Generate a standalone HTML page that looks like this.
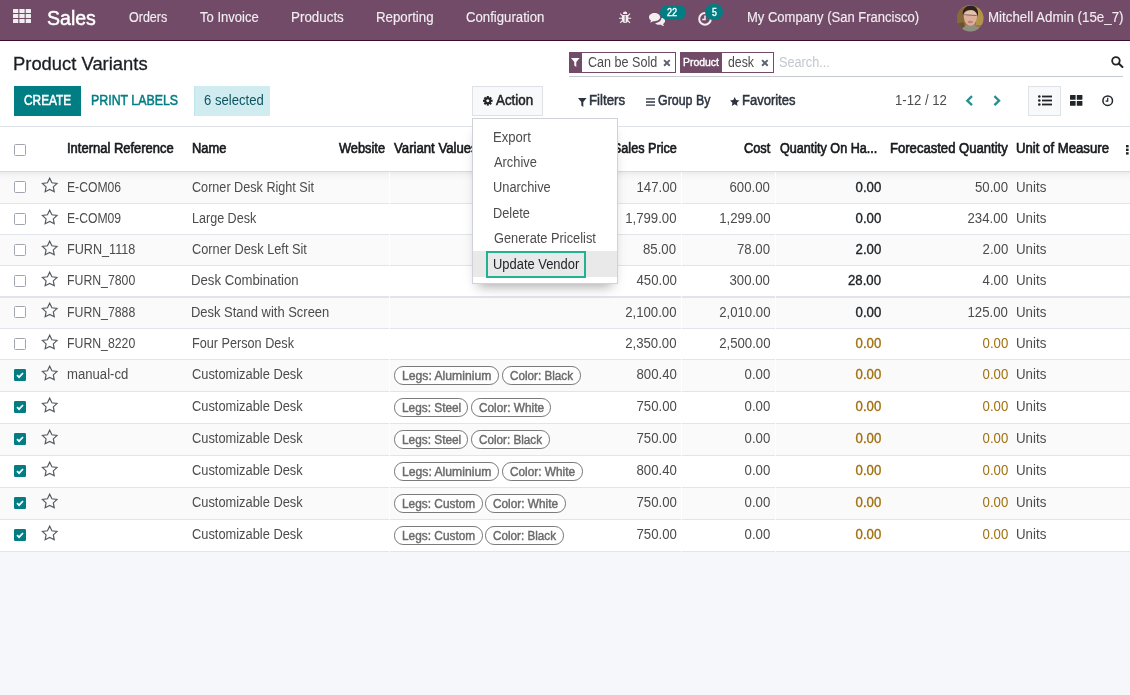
<!DOCTYPE html>
<html lang="en"><head><meta charset="utf-8"><title>Odoo - Product Variants</title>
<style>
*{box-sizing:border-box}
html,body{margin:0;padding:0}
body{width:1130px;height:695px;overflow:hidden;position:relative;background:#f6f7fa;font-family:"Liberation Sans",Arial,sans-serif;font-size:14px;color:#4c4c4c}
.t{position:absolute;white-space:nowrap;line-height:1;transform-origin:0 50%;display:block}
.abs{position:absolute}
nav{position:absolute;left:0;top:0;width:1130px;height:41px;background:#714B67;border-bottom:1px solid #3c0c30}
.cp{position:absolute;left:0;top:41px;width:1130px;height:86px;background:#fff;border-bottom:1px solid #dfe2e6}
.tbl{position:absolute;left:0;top:127px;width:1130px;height:425px;background:#fff}
.row{position:absolute;left:0;width:1130px;border-top:1px solid #e1e4e8;background:#fff}
.row.odd{background:#fafafa}
.cb{position:absolute;left:14px;width:12px;height:12px;border:1px solid #a2a7af;border-radius:1.5px;background:#fff}
.cb.on{background:#017e84;border-color:#017e84;width:11.5px;border-radius:1px}
.pill{position:absolute;height:18.2px;border:1px solid #7b7b7b;border-radius:9.1px;background:#fff}
.btn{position:absolute;top:86px;height:30px}
.dd{position:absolute;left:472px;top:118px;width:146px;height:166px;background:#fff;border:1px solid #cfd2d8;box-shadow:0 8px 12px -6px rgba(0,0,0,.36)}
svg{position:absolute;overflow:visible}
</style></head>
<body>
<nav>

<svg style="left:13px;top:9px" width="18" height="14" viewBox="0 0 18 14" fill="#f1edf0"><rect x="0" y="0" width="5.3" height="4" rx=".6"/><rect x="6.35" y="0" width="5.3" height="4" rx=".6"/><rect x="12.7" y="0" width="5.3" height="4" rx=".6"/><rect x="0" y="5" width="5.3" height="4" rx=".6"/><rect x="6.35" y="5" width="5.3" height="4" rx=".6"/><rect x="12.7" y="5" width="5.3" height="4" rx=".6"/><rect x="0" y="10" width="5.3" height="4" rx=".6"/><rect x="6.35" y="10" width="5.3" height="4" rx=".6"/><rect x="12.7" y="10" width="5.3" height="4" rx=".6"/></svg>
<svg style="left:619px;top:10.6px" width="12.2" height="12.8" viewBox="0 0 12.2 12.8">
<g stroke="#f1edf0" stroke-width="1.1" fill="none"><path d="M0 7.2H12.2M1.2 2.6L3.4 4.8M11 2.6L8.8 4.8M1.2 12L3.4 9.6M11 12L8.8 9.6"/></g>
<path d="M3.9 2.9a2.2 2.4 0 0 1 4.4 0z" fill="#f1edf0"/>
<path d="M2.9 3.9h6.4v4.6a3.2 3.4 0 0 1-6.4 0z" fill="#f1edf0"/>
<rect x="5.7" y="4.6" width=".9" height="6.6" fill="#714B67"/>
</svg>
<svg style="left:648.8px;top:12.7px" width="16.4" height="12.8" viewBox="0 0 16.4 12.8" fill="#f1edf0">
<path d="M5.6 0C2.5 0 0 1.9 0 4.2c0 1.3.8 2.5 2.1 3.3-.2.8-.7 1.5-1.3 2 1.300-.100 2.500-.600 3.400-1.300.450.080.920.120 1.400.120 3.100 0 5.600-1.900 5.600-4.200S8.700 0 5.600 0z"/>
<path d="M12.4 4.700c0 2.700-2.800 4.900-6.300 5.050 1.000 1.000 2.600 1.650 4.400 1.650.480 0 .950-.040 1.400-.120.900.700 2.100 1.200 3.400 1.300-.600-.500-1.100-1.200-1.300-2 1.300-.800 2.100-2 2.100-3.300 0-1.400-.950-2.650-2.400-3.400.200.260.300.540.300.820z" transform="translate(0 .4)"/>
</svg>
<div class="abs" style="left:659.9px;top:4.8px;width:25.7px;height:15.6px;border-radius:7.8px;background:#017e84"></div>
<svg style="left:697.9px;top:11.7px" width="14.1" height="13.8" viewBox="0 0 14.1 13.8">
<circle cx="7" cy="6.9" r="5.8" fill="none" stroke="#f1edf0" stroke-width="2"/>
<path d="M7 3.4V7.4H4.2" fill="none" stroke="#f1edf0" stroke-width="1.5"/>
</svg>
<div class="abs" style="left:704.5px;top:4.2px;width:18.3px;height:16px;border-radius:8px;background:#017e84"></div>
<svg style="left:956.7px;top:4.7px" width="26.5" height="26.5" viewBox="0 0 26.5 26.5">
<defs><clipPath id="av"><circle cx="13.25" cy="13.25" r="13.25"/></clipPath><filter id="bl" x="-20%" y="-20%" width="140%" height="140%"><feGaussianBlur stdDeviation=".75"/></filter></defs>
<g clip-path="url(#av)"><rect width="26.5" height="26.5" fill="#98793f"/>
<g filter="url(#bl)">
<rect x="-2" y="-2" width="9" height="30" fill="#86683a"/><rect x="19" y="3" width="9" height="17" fill="#b3924e"/>
<path d="M-1 19 L7 17 L9 28 L-1 28Z" fill="#6a5236"/>
<path d="M4 28 C5 21 9 20.500 13 21 C19 20 23.500 21.500 25 28Z" fill="#8d8f82"/>
<path d="M6.800 12 C6.300 6.500 9.500 3.800 13.600 3.800 C17.800 3.800 20.400 7 19.800 12.500 C19.300 17 17 20.800 13.600 20.800 C10 20.800 7.300 17 6.800 12Z" fill="#dcb09a"/>
<path d="M8 9 C10 5.500 16 5 19 8.500 L19.500 12 C17 9.500 10 9.500 7.500 12Z" fill="#e7c3ae"/>
<path d="M5.900 10.500 C4.800 3.500 9.500 .4 14.500 .8 C19.500 1.200 22 5 20.800 12 C20.300 8.500 18.800 6 16 5.200 C12.500 4.300 8.500 5.500 7 8 C6.400 9 6.100 9.800 5.900 10.500Z" fill="#2a211e"/>
<rect x="7.300" y="9.600" width="12.300" height="1" fill="#6a5650" opacity=".85" transform="rotate(4 13 10)"/>
<ellipse cx="13.300" cy="17" rx="2.700" ry="1.200" fill="#c4807c"/>
<path d="M8.500 19 C10 22 17 22 19 18.500 L18 21 L9.500 21.500Z" fill="#b98b78"/>
</g></g></svg>

<span class="t" style="left:47.44px;top:8.0px;font-size:20.5px;transform:scaleX(0.9528);color:#ffffff;-webkit-text-stroke:0.5px #ffffff;">Sales</span>
<span class="t" style="left:128.67px;top:10.0px;font-size:14px;transform:scaleX(0.8944);color:#f1edf0;-webkit-text-stroke:0.15px #f1edf0;">Orders</span>
<span class="t" style="left:200.07px;top:10.0px;font-size:14px;transform:scaleX(0.9306);color:#f1edf0;-webkit-text-stroke:0.15px #f1edf0;">To Invoice</span>
<span class="t" style="left:290.52px;top:10.0px;font-size:14px;transform:scaleX(0.9559);color:#f1edf0;-webkit-text-stroke:0.15px #f1edf0;">Products</span>
<span class="t" style="left:375.52px;top:10.0px;font-size:14px;transform:scaleX(0.9481);color:#f1edf0;-webkit-text-stroke:0.15px #f1edf0;">Reporting</span>
<span class="t" style="left:465.67px;top:10.0px;font-size:14px;transform:scaleX(0.9414);color:#f1edf0;-webkit-text-stroke:0.15px #f1edf0;">Configuration</span>
<span class="t" style="left:747.14px;top:10.0px;font-size:14px;transform:scaleX(0.9289);color:#f1edf0;-webkit-text-stroke:0.15px #f1edf0;">My Company (San Francisco)</span>
<span class="t" style="left:987.72px;top:10.0px;font-size:14px;transform:scaleX(0.9516);color:#f1edf0;-webkit-text-stroke:0.15px #f1edf0;">Mitchell Admin (15e_7)</span>
<span class="t" style="left:667.47px;top:6.9px;font-size:10.5px;transform:scaleX(0.8756);color:#fff;-webkit-text-stroke:0.38px #fff;">22</span>
<span class="t" style="left:711.56px;top:6.7px;font-size:10.5px;transform:scaleX(0.8307);color:#fff;-webkit-text-stroke:0.38px #fff;">5</span>
</nav>
<div class="cp">

<div class="abs" style="left:569px;top:11px;width:107px;height:21px;border:1px solid #714B67;background:#fff"></div>
<div class="abs" style="left:569px;top:11px;width:13px;height:21px;background:#714B67"></div>
<svg style="left:571.2px;top:17.2px" width="8.6" height="9" viewBox="0 0 8.6 9"><path d="M0 0H8.6L5.3 3.900V9L3.300 7.400V3.900Z" fill="#fff"/></svg>
<svg style="left:663.2px;top:18.1px" width="7.8" height="7.8" viewBox="0 0 7.2 7.2"><path d="M1 1L6.2 6.2M6.2 1L1 6.2" stroke="#5c6370" stroke-width="1.8" fill="none"/></svg>
<div class="abs" style="left:680px;top:11px;width:94px;height:21px;border:1px solid #714B67;background:#fff"></div>
<div class="abs" style="left:680px;top:11px;width:41.600px;height:21px;background:#714B67"></div>
<svg style="left:760.9px;top:18.1px" width="7.8" height="7.8" viewBox="0 0 7.2 7.2"><path d="M1 1L6.2 6.2M6.2 1L1 6.2" stroke="#5c6370" stroke-width="1.8" fill="none"/></svg>
<div class="abs" style="left:569px;top:35px;width:554px;height:1px;background:#c5c9d0"></div>
<svg style="left:1111px;top:15.2px" width="12.4" height="11.6" viewBox="0 0 12.600 12"><circle cx="5" cy="5" r="3.900" fill="none" stroke="#212529" stroke-width="1.900"/><path d="M7.900 7.800L11.700 11.300" stroke="#212529" stroke-width="2.200" stroke-linecap="round"/></svg>

<div class="btn" style="left:14px;top:45px;width:67px;background:#017e84"></div>
<div class="btn" style="left:194px;top:45px;width:76px;background:#d1ecf1;border-left:1px solid #bee5eb"></div>
<div class="btn" style="left:472px;top:45px;width:71px;background:#f8f9fa;border:1px solid #dee2e6"></div>
<svg style="left:482.600px;top:54.800px" width="9.600" height="9.600" viewBox="-4.800 -4.800 9.600 9.600">
<g fill="#212529"><circle r="3.500"/>
<rect x="-1.050" y="-4.800" width="2.100" height="9.600"/><rect x="-1.050" y="-4.800" width="2.100" height="9.600" transform="rotate(45)"/><rect x="-1.050" y="-4.800" width="2.100" height="9.600" transform="rotate(90)"/><rect x="-1.050" y="-4.800" width="2.100" height="9.600" transform="rotate(135)"/></g>
<circle r="1.500" fill="#f8f9fa"/></svg>

<svg style="left:578px;top:56.500px" width="8.600" height="9" viewBox="0 0 8.600 9"><path d="M0 0H8.600L5.300 3.900V9L3.300 7.400V3.900Z" fill="#2c3440"/></svg>
<svg style="left:645.600px;top:56.500px" width="9" height="8" viewBox="0 0 9 8"><path d="M0 .9H9M0 4H9M0 7.100H9" stroke="#2c3440" stroke-width="1.400"/></svg>
<svg style="left:730px;top:55.500px" width="9.400" height="9" viewBox="0 0 9.400 9"><path d="M4.700 0L6.100 3.100L9.400 3.450L6.950 5.700L7.600 9L4.700 7.350L1.800 9L2.450 5.700L0 3.450L3.300 3.100Z" fill="#2c3440"/></svg>

<svg style="left:965px;top:53.600px" width="8.400" height="11.400" viewBox="0 0 8.400 11.400"><path d="M7 1.200L2.300 5.700L7 10.200" fill="none" stroke="#2a8d92" stroke-width="2.300"/></svg>
<svg style="left:992.600px;top:53.600px" width="8.400" height="11.400" viewBox="0 0 8.400 11.400"><path d="M1.400 1.200L6.100 5.700L1.400 10.200" fill="none" stroke="#2a8d92" stroke-width="2.300"/></svg>

<div class="btn" style="left:1028px;top:45px;width:33px;background:#f8f9fa;border:1px solid #dee2e6"></div>
<svg style="left:1037.600px;top:54px" width="14" height="11" viewBox="0 0 14 11" fill="#212529">
<circle cx="1.300" cy="1.500" r="1.300"/><circle cx="1.300" cy="5.500" r="1.300"/><circle cx="1.300" cy="9.500" r="1.300"/>
<rect x="4" y=".6" width="10" height="1.800"/><rect x="4" y="4.600" width="10" height="1.800"/><rect x="4" y="8.600" width="10" height="1.800"/></svg>
<svg style="left:1070px;top:53.600px" width="12.400" height="10.800" viewBox="0 0 12.400 10.800" fill="#212529">
<rect x="0" y="0" width="5.600" height="4.800" rx=".5"/><rect x="6.800" y="0" width="5.600" height="4.800" rx=".5"/><rect x="0" y="6" width="5.600" height="4.800" rx=".5"/><rect x="6.800" y="6" width="5.600" height="4.800" rx=".5"/></svg>
<svg style="left:1101.600px;top:54px" width="11.400" height="11.400" viewBox="0 0 11.400 11.400"><circle cx="5.700" cy="5.700" r="4.800" fill="none" stroke="#212529" stroke-width="1.500"/><path d="M5.700 2.800V6.100H3.600" fill="none" stroke="#212529" stroke-width="1.200"/></svg>

<div class="abs" style="left:0px;top:-41px;width:1130px;height:0"><span class="t" style="left:13.16px;top:54.5px;font-size:18.6px;transform:scaleX(0.9891);color:#1b1f23;-webkit-text-stroke:0.3px #1b1f23;">Product Variants</span>
<span class="t" style="left:23.81px;top:93.0px;font-size:14px;transform:scaleX(0.8478);color:#fff;-webkit-text-stroke:0.5px #fff;">CREATE</span>
<span class="t" style="left:90.74px;top:93.0px;font-size:14px;transform:scaleX(0.8839);color:#017e84;-webkit-text-stroke:0.5px #017e84;">PRINT LABELS</span>
<span class="t" style="left:203.60px;top:93.0px;font-size:14px;transform:scaleX(0.9360);color:#0c5460;">6 selected</span>
<span class="t" style="left:495.84px;top:93.0px;font-size:14px;transform:scaleX(0.9528);color:#212529;-webkit-text-stroke:0.5px #212529;">Action</span>
<span class="t" style="left:589.29px;top:93.0px;font-size:14px;transform:scaleX(0.9465);color:#2c3440;-webkit-text-stroke:0.5px #2c3440;">Filters</span>
<span class="t" style="left:657.82px;top:93.0px;font-size:14px;transform:scaleX(0.8853);color:#2c3440;-webkit-text-stroke:0.5px #2c3440;">Group By</span>
<span class="t" style="left:742.30px;top:93.0px;font-size:14px;transform:scaleX(0.9286);color:#2c3440;-webkit-text-stroke:0.5px #2c3440;">Favorites</span>
<span class="t" style="left:895.46px;top:93.0px;font-size:14px;transform:scaleX(0.9399);">1-12 / 12</span>
<span class="t" style="left:588.00px;top:55.0px;font-size:14px;transform:scaleX(0.8995);">Can be Sold</span>
<span class="t" style="left:682.79px;top:57.1px;font-size:10.6px;transform:scaleX(0.9852);color:#fff;-webkit-text-stroke:0.38px #fff;">Product</span>
<span class="t" style="left:727.60px;top:55.0px;font-size:14px;transform:scaleX(0.8766);">desk</span>
<span class="t" style="left:779.00px;top:55.0px;font-size:14px;transform:scaleX(0.9068);color:#c3c7cc;">Search...</span></div>
</div>
<div class="tbl">
<div class="row odd" style="top:44px;height:32px;border-top-width:1px;border-top-color:#eaebee"></div>
<div class="row" style="top:76px;height:31px;border-top-width:1px"></div>
<div class="row odd" style="top:107px;height:31px;border-top-width:1px"></div>
<div class="row" style="top:138px;height:31px;border-top-width:1px"></div>
<div class="row odd" style="top:169px;height:32px;border-top-width:2px"></div>
<div class="row" style="top:201px;height:31px;border-top-width:1px"></div>
<div class="row odd" style="top:232px;height:32px;border-top-width:1px"></div>
<div class="row" style="top:264px;height:32px;border-top-width:1px"></div>
<div class="row odd" style="top:296px;height:32px;border-top-width:1px"></div>
<div class="row" style="top:328px;height:32px;border-top-width:1px"></div>
<div class="row odd" style="top:360px;height:32px;border-top-width:1px"></div>
<div class="row" style="top:392px;height:32px;border-top-width:1px"></div>
<div class="row" style="top:424px;height:1px;"></div>
<div class="cb" style="top:54px"></div>
<svg style="left:41.4px;top:50.2px" width="17.4" height="16" viewBox="0 0 16.8 16" preserveAspectRatio="none"><path d="M8.4 1.2 L10.55 5.75 L15.5 6.45 L11.9 9.9 L12.8 14.8 L8.4 12.45 L4 14.8 L4.9 9.9 L1.3 6.45 L6.25 5.75 Z" fill="none" stroke="#555b66" stroke-width="1.15" stroke-linejoin="miter"/></svg>
<div class="cb" style="top:86px"></div>
<svg style="left:41.4px;top:81.7px" width="17.4" height="16" viewBox="0 0 16.8 16" preserveAspectRatio="none"><path d="M8.4 1.2 L10.55 5.75 L15.5 6.45 L11.9 9.9 L12.8 14.8 L8.4 12.45 L4 14.8 L4.9 9.9 L1.3 6.45 L6.25 5.75 Z" fill="none" stroke="#555b66" stroke-width="1.15" stroke-linejoin="miter"/></svg>
<div class="cb" style="top:117px"></div>
<svg style="left:41.4px;top:112.7px" width="17.4" height="16" viewBox="0 0 16.8 16" preserveAspectRatio="none"><path d="M8.4 1.2 L10.55 5.75 L15.5 6.45 L11.9 9.9 L12.8 14.8 L8.4 12.45 L4 14.8 L4.9 9.9 L1.3 6.45 L6.25 5.75 Z" fill="none" stroke="#555b66" stroke-width="1.15" stroke-linejoin="miter"/></svg>
<div class="cb" style="top:148px"></div>
<svg style="left:41.4px;top:143.7px" width="17.4" height="16" viewBox="0 0 16.8 16" preserveAspectRatio="none"><path d="M8.4 1.2 L10.55 5.75 L15.5 6.45 L11.9 9.9 L12.8 14.8 L8.4 12.45 L4 14.8 L4.9 9.9 L1.3 6.45 L6.25 5.75 Z" fill="none" stroke="#555b66" stroke-width="1.15" stroke-linejoin="miter"/></svg>
<div class="cb" style="top:179px"></div>
<svg style="left:41.4px;top:175.2px" width="17.4" height="16" viewBox="0 0 16.8 16" preserveAspectRatio="none"><path d="M8.4 1.2 L10.55 5.75 L15.5 6.45 L11.9 9.9 L12.8 14.8 L8.4 12.45 L4 14.8 L4.9 9.9 L1.3 6.45 L6.25 5.75 Z" fill="none" stroke="#555b66" stroke-width="1.15" stroke-linejoin="miter"/></svg>
<div class="cb" style="top:211px"></div>
<svg style="left:41.4px;top:206.7px" width="17.4" height="16" viewBox="0 0 16.8 16" preserveAspectRatio="none"><path d="M8.4 1.2 L10.55 5.75 L15.5 6.45 L11.9 9.9 L12.8 14.8 L8.4 12.45 L4 14.8 L4.9 9.9 L1.3 6.45 L6.25 5.75 Z" fill="none" stroke="#555b66" stroke-width="1.15" stroke-linejoin="miter"/></svg>
<div class="cb on" style="top:242px"><svg style="left:0;top:0" width="10" height="10" viewBox="0 0 10 10"><path d="M2 5.2 L4.1 7.2 L8 3" fill="none" stroke="#fff" stroke-width="1.7"/></svg></div>
<svg style="left:41.4px;top:238.2px" width="17.4" height="16" viewBox="0 0 16.8 16" preserveAspectRatio="none"><path d="M8.4 1.2 L10.55 5.75 L15.5 6.45 L11.9 9.9 L12.8 14.8 L8.4 12.45 L4 14.8 L4.9 9.9 L1.3 6.45 L6.25 5.75 Z" fill="none" stroke="#555b66" stroke-width="1.15" stroke-linejoin="miter"/></svg>
<div class="cb on" style="top:274px"><svg style="left:0;top:0" width="10" height="10" viewBox="0 0 10 10"><path d="M2 5.2 L4.1 7.2 L8 3" fill="none" stroke="#fff" stroke-width="1.7"/></svg></div>
<svg style="left:41.4px;top:270.2px" width="17.4" height="16" viewBox="0 0 16.8 16" preserveAspectRatio="none"><path d="M8.4 1.2 L10.55 5.75 L15.5 6.45 L11.9 9.9 L12.8 14.8 L8.4 12.45 L4 14.8 L4.9 9.9 L1.3 6.45 L6.25 5.75 Z" fill="none" stroke="#555b66" stroke-width="1.15" stroke-linejoin="miter"/></svg>
<div class="cb on" style="top:306px"><svg style="left:0;top:0" width="10" height="10" viewBox="0 0 10 10"><path d="M2 5.2 L4.1 7.2 L8 3" fill="none" stroke="#fff" stroke-width="1.7"/></svg></div>
<svg style="left:41.4px;top:302.2px" width="17.4" height="16" viewBox="0 0 16.8 16" preserveAspectRatio="none"><path d="M8.4 1.2 L10.55 5.75 L15.5 6.45 L11.9 9.9 L12.8 14.8 L8.4 12.45 L4 14.8 L4.9 9.9 L1.3 6.45 L6.25 5.75 Z" fill="none" stroke="#555b66" stroke-width="1.15" stroke-linejoin="miter"/></svg>
<div class="cb on" style="top:338px"><svg style="left:0;top:0" width="10" height="10" viewBox="0 0 10 10"><path d="M2 5.2 L4.1 7.2 L8 3" fill="none" stroke="#fff" stroke-width="1.7"/></svg></div>
<svg style="left:41.4px;top:334.2px" width="17.4" height="16" viewBox="0 0 16.8 16" preserveAspectRatio="none"><path d="M8.4 1.2 L10.55 5.75 L15.5 6.45 L11.9 9.9 L12.8 14.8 L8.4 12.45 L4 14.8 L4.9 9.9 L1.3 6.45 L6.25 5.75 Z" fill="none" stroke="#555b66" stroke-width="1.15" stroke-linejoin="miter"/></svg>
<div class="cb on" style="top:370px"><svg style="left:0;top:0" width="10" height="10" viewBox="0 0 10 10"><path d="M2 5.2 L4.1 7.2 L8 3" fill="none" stroke="#fff" stroke-width="1.7"/></svg></div>
<svg style="left:41.4px;top:366.2px" width="17.4" height="16" viewBox="0 0 16.8 16" preserveAspectRatio="none"><path d="M8.4 1.2 L10.55 5.75 L15.5 6.45 L11.9 9.9 L12.8 14.8 L8.4 12.45 L4 14.8 L4.9 9.9 L1.3 6.45 L6.25 5.75 Z" fill="none" stroke="#555b66" stroke-width="1.15" stroke-linejoin="miter"/></svg>
<div class="cb on" style="top:402px"><svg style="left:0;top:0" width="10" height="10" viewBox="0 0 10 10"><path d="M2 5.2 L4.1 7.2 L8 3" fill="none" stroke="#fff" stroke-width="1.7"/></svg></div>
<svg style="left:41.4px;top:398.2px" width="17.4" height="16" viewBox="0 0 16.8 16" preserveAspectRatio="none"><path d="M8.4 1.2 L10.55 5.75 L15.5 6.45 L11.9 9.9 L12.8 14.8 L8.4 12.45 L4 14.8 L4.9 9.9 L1.3 6.45 L6.25 5.75 Z" fill="none" stroke="#555b66" stroke-width="1.15" stroke-linejoin="miter"/></svg>
<div class="pill" style="left:394.4px;top:239.4px;width:105.1px"></div>
<div class="pill" style="left:502.1px;top:239.4px;width:79.1px"></div>
<div class="pill" style="left:394.4px;top:271.4px;width:73.7px"></div>
<div class="pill" style="left:470.7px;top:271.4px;width:80.5px"></div>
<div class="pill" style="left:394.4px;top:303.4px;width:73.7px"></div>
<div class="pill" style="left:470.7px;top:303.4px;width:79.1px"></div>
<div class="pill" style="left:394.4px;top:335.4px;width:105.1px"></div>
<div class="pill" style="left:502.1px;top:335.4px;width:80.5px"></div>
<div class="pill" style="left:394.4px;top:367.4px;width:88.3px"></div>
<div class="pill" style="left:485.3px;top:367.4px;width:80.5px"></div>
<div class="pill" style="left:394.4px;top:399.4px;width:88.3px"></div>
<div class="pill" style="left:485.3px;top:399.4px;width:79.1px"></div>

<div class="abs" style="left:0;top:44px;width:1130px;height:10px;background:linear-gradient(to bottom,rgba(0,0,0,.075),rgba(0,0,0,.02) 45%,rgba(0,0,0,0))"></div>
<div class="abs" style="left:389px;top:45px;width:1px;height:380px;background:rgba(255,255,255,.85)"></div>
<div class="abs" style="left:681px;top:45px;width:1px;height:380px;background:rgba(255,255,255,.85)"></div>
<div class="abs" style="left:775px;top:45px;width:1px;height:380px;background:rgba(255,255,255,.85)"></div>
<div class="cb" style="top:17px"></div>
<svg style="left:1126px;top:18px" width="4" height="10" viewBox="0 0 4 10" fill="#212529"><rect x="0" y="0" width="2.600" height="2.400"/><rect x="0" y="3.600" width="2.600" height="2.400"/><rect x="0" y="7.200" width="2.600" height="2.400"/></svg>

<div class="abs" style="left:0px;top:-127px;width:1130px;height:0"><span class="t" style="left:66.77px;top:141.0px;font-size:14px;transform:scaleX(0.9268);color:#171a1d;-webkit-text-stroke:0.63px #171a1d;">Internal Reference</span>
<span class="t" style="left:191.77px;top:141.0px;font-size:14px;transform:scaleX(0.9196);color:#171a1d;-webkit-text-stroke:0.63px #171a1d;">Name</span>
<span class="t" style="left:338.89px;top:141.0px;font-size:14px;transform:scaleX(0.9147);color:#171a1d;-webkit-text-stroke:0.63px #171a1d;">Website</span>
<span class="t" style="left:394.30px;top:141.0px;font-size:14px;transform:scaleX(0.9408);color:#171a1d;-webkit-text-stroke:0.63px #171a1d;">Variant Values</span>
<span class="t" style="right:453.47px;transform-origin:100% 50%;top:141.0px;font-size:14px;transform:scaleX(0.9030);color:#171a1d;-webkit-text-stroke:0.63px #171a1d;">Sales Price</span>
<span class="t" style="left:744.29px;top:141.0px;font-size:14px;transform:scaleX(0.9144);color:#171a1d;-webkit-text-stroke:0.63px #171a1d;">Cost</span>
<span class="t" style="left:779.88px;top:141.0px;font-size:14px;transform:scaleX(0.8990);color:#171a1d;-webkit-text-stroke:0.63px #171a1d;">Quantity On Ha...</span>
<span class="t" style="left:889.96px;top:141.0px;font-size:14px;transform:scaleX(0.9340);color:#171a1d;-webkit-text-stroke:0.63px #171a1d;">Forecasted Quantity</span>
<span class="t" style="left:1015.96px;top:141.0px;font-size:14px;transform:scaleX(0.9406);color:#171a1d;-webkit-text-stroke:0.63px #171a1d;">Unit of Measure</span>
<span class="t" style="left:66.53px;top:179.5px;font-size:14px;transform:scaleX(0.8690);">E-COM06</span>
<span class="t" style="left:192.40px;top:179.5px;font-size:14px;transform:scaleX(0.9019);">Corner Desk Right Sit</span>
<span class="t" style="right:453.59px;transform-origin:100% 50%;top:179.5px;font-size:14px;transform:scaleX(0.9420);">147.00</span>
<span class="t" style="right:359.99px;transform-origin:100% 50%;top:179.5px;font-size:14px;transform:scaleX(0.9420);">600.00</span>
<span class="t" style="right:248.77px;transform-origin:100% 50%;top:179.5px;font-size:14px;transform:scaleX(0.9420);color:#212529;-webkit-text-stroke:0.36px #212529;">0.00</span>
<span class="t" style="right:122.19px;transform-origin:100% 50%;top:179.5px;font-size:14px;transform:scaleX(0.9420);">50.00</span>
<span class="t" style="left:1015.65px;top:179.5px;font-size:14px;transform:scaleX(0.9516);">Units</span>
<span class="t" style="left:66.53px;top:211.0px;font-size:14px;transform:scaleX(0.8690);">E-COM09</span>
<span class="t" style="left:191.50px;top:211.0px;font-size:14px;transform:scaleX(0.8967);">Large Desk</span>
<span class="t" style="right:453.60px;transform-origin:100% 50%;top:211.0px;font-size:14px;transform:scaleX(0.9420);">1,799.00</span>
<span class="t" style="right:360.00px;transform-origin:100% 50%;top:211.0px;font-size:14px;transform:scaleX(0.9420);">1,299.00</span>
<span class="t" style="right:248.77px;transform-origin:100% 50%;top:211.0px;font-size:14px;transform:scaleX(0.9420);color:#212529;-webkit-text-stroke:0.36px #212529;">0.00</span>
<span class="t" style="right:122.19px;transform-origin:100% 50%;top:211.0px;font-size:14px;transform:scaleX(0.9420);">234.00</span>
<span class="t" style="left:1015.65px;top:211.0px;font-size:14px;transform:scaleX(0.9516);">Units</span>
<span class="t" style="left:66.50px;top:242.0px;font-size:14px;transform:scaleX(0.9019);">FURN_1118</span>
<span class="t" style="left:192.40px;top:242.0px;font-size:14px;transform:scaleX(0.9116);">Corner Desk Left Sit</span>
<span class="t" style="right:453.59px;transform-origin:100% 50%;top:242.0px;font-size:14px;transform:scaleX(0.9420);">85.00</span>
<span class="t" style="right:359.99px;transform-origin:100% 50%;top:242.0px;font-size:14px;transform:scaleX(0.9420);">78.00</span>
<span class="t" style="right:248.77px;transform-origin:100% 50%;top:242.0px;font-size:14px;transform:scaleX(0.9420);color:#212529;-webkit-text-stroke:0.36px #212529;">2.00</span>
<span class="t" style="right:122.20px;transform-origin:100% 50%;top:242.0px;font-size:14px;transform:scaleX(0.9420);">2.00</span>
<span class="t" style="left:1015.65px;top:242.0px;font-size:14px;transform:scaleX(0.9516);">Units</span>
<span class="t" style="left:66.52px;top:273.0px;font-size:14px;transform:scaleX(0.8776);">FURN_7800</span>
<span class="t" style="left:191.46px;top:273.0px;font-size:14px;transform:scaleX(0.9414);">Desk Combination</span>
<span class="t" style="right:453.59px;transform-origin:100% 50%;top:273.0px;font-size:14px;transform:scaleX(0.9420);">450.00</span>
<span class="t" style="right:359.99px;transform-origin:100% 50%;top:273.0px;font-size:14px;transform:scaleX(0.9420);">300.00</span>
<span class="t" style="right:248.76px;transform-origin:100% 50%;top:273.0px;font-size:14px;transform:scaleX(0.9420);color:#212529;-webkit-text-stroke:0.36px #212529;">28.00</span>
<span class="t" style="right:122.20px;transform-origin:100% 50%;top:273.0px;font-size:14px;transform:scaleX(0.9420);">4.00</span>
<span class="t" style="left:1015.65px;top:273.0px;font-size:14px;transform:scaleX(0.9516);">Units</span>
<span class="t" style="left:66.52px;top:304.5px;font-size:14px;transform:scaleX(0.8776);">FURN_7888</span>
<span class="t" style="left:191.47px;top:304.5px;font-size:14px;transform:scaleX(0.9253);">Desk Stand with Screen</span>
<span class="t" style="right:453.60px;transform-origin:100% 50%;top:304.5px;font-size:14px;transform:scaleX(0.9420);">2,100.00</span>
<span class="t" style="right:360.00px;transform-origin:100% 50%;top:304.5px;font-size:14px;transform:scaleX(0.9420);">2,010.00</span>
<span class="t" style="right:248.77px;transform-origin:100% 50%;top:304.5px;font-size:14px;transform:scaleX(0.9420);color:#212529;-webkit-text-stroke:0.36px #212529;">0.00</span>
<span class="t" style="right:122.19px;transform-origin:100% 50%;top:304.5px;font-size:14px;transform:scaleX(0.9420);">125.00</span>
<span class="t" style="left:1015.65px;top:304.5px;font-size:14px;transform:scaleX(0.9516);">Units</span>
<span class="t" style="left:66.52px;top:336.0px;font-size:14px;transform:scaleX(0.8776);">FURN_8220</span>
<span class="t" style="left:191.50px;top:336.0px;font-size:14px;transform:scaleX(0.9041);">Four Person Desk</span>
<span class="t" style="right:453.60px;transform-origin:100% 50%;top:336.0px;font-size:14px;transform:scaleX(0.9420);">2,350.00</span>
<span class="t" style="right:360.00px;transform-origin:100% 50%;top:336.0px;font-size:14px;transform:scaleX(0.9420);">2,500.00</span>
<span class="t" style="right:248.77px;transform-origin:100% 50%;top:336.0px;font-size:14px;transform:scaleX(0.9420);color:#a0710f;-webkit-text-stroke:0.36px #a0710f;">0.00</span>
<span class="t" style="right:122.20px;transform-origin:100% 50%;top:336.0px;font-size:14px;transform:scaleX(0.9420);color:#a0710f;">0.00</span>
<span class="t" style="left:1015.65px;top:336.0px;font-size:14px;transform:scaleX(0.9516);">Units</span>
<span class="t" style="left:67.40px;top:367.0px;font-size:14px;transform:scaleX(0.9384);">manual-cd</span>
<span class="t" style="left:192.40px;top:367.0px;font-size:14px;transform:scaleX(0.9178);">Customizable Desk</span>
<span class="t" style="right:453.59px;transform-origin:100% 50%;top:367.0px;font-size:14px;transform:scaleX(0.9420);">800.40</span>
<span class="t" style="right:360.00px;transform-origin:100% 50%;top:367.0px;font-size:14px;transform:scaleX(0.9420);">0.00</span>
<span class="t" style="right:248.77px;transform-origin:100% 50%;top:367.0px;font-size:14px;transform:scaleX(0.9420);color:#a0710f;-webkit-text-stroke:0.36px #a0710f;">0.00</span>
<span class="t" style="right:122.20px;transform-origin:100% 50%;top:367.0px;font-size:14px;transform:scaleX(0.9420);color:#a0710f;">0.00</span>
<span class="t" style="left:1015.65px;top:367.0px;font-size:14px;transform:scaleX(0.9516);">Units</span>
<span class="t" style="left:402.22px;top:369.8px;font-size:12px;transform:scaleX(1.0141);color:#6b6b6b;-webkit-text-stroke:0.43px #6b6b6b;">Legs: Aluminium</span>
<span class="t" style="left:509.91px;top:369.8px;font-size:12px;transform:scaleX(0.9740);color:#6b6b6b;-webkit-text-stroke:0.43px #6b6b6b;">Color: Black</span>
<span class="t" style="left:192.40px;top:399.0px;font-size:14px;transform:scaleX(0.9178);">Customizable Desk</span>
<span class="t" style="right:453.59px;transform-origin:100% 50%;top:399.0px;font-size:14px;transform:scaleX(0.9420);">750.00</span>
<span class="t" style="right:360.00px;transform-origin:100% 50%;top:399.0px;font-size:14px;transform:scaleX(0.9420);">0.00</span>
<span class="t" style="right:248.77px;transform-origin:100% 50%;top:399.0px;font-size:14px;transform:scaleX(0.9420);color:#a0710f;-webkit-text-stroke:0.36px #a0710f;">0.00</span>
<span class="t" style="right:122.20px;transform-origin:100% 50%;top:399.0px;font-size:14px;transform:scaleX(0.9420);color:#a0710f;">0.00</span>
<span class="t" style="left:1015.65px;top:399.0px;font-size:14px;transform:scaleX(0.9516);">Units</span>
<span class="t" style="left:402.21px;top:401.8px;font-size:12px;transform:scaleX(0.9865);color:#6b6b6b;-webkit-text-stroke:0.43px #6b6b6b;">Legs: Steel</span>
<span class="t" style="left:478.51px;top:401.8px;font-size:12px;transform:scaleX(0.9854);color:#6b6b6b;-webkit-text-stroke:0.43px #6b6b6b;">Color: White</span>
<span class="t" style="left:192.40px;top:431.0px;font-size:14px;transform:scaleX(0.9178);">Customizable Desk</span>
<span class="t" style="right:453.59px;transform-origin:100% 50%;top:431.0px;font-size:14px;transform:scaleX(0.9420);">750.00</span>
<span class="t" style="right:360.00px;transform-origin:100% 50%;top:431.0px;font-size:14px;transform:scaleX(0.9420);">0.00</span>
<span class="t" style="right:248.77px;transform-origin:100% 50%;top:431.0px;font-size:14px;transform:scaleX(0.9420);color:#a0710f;-webkit-text-stroke:0.36px #a0710f;">0.00</span>
<span class="t" style="right:122.20px;transform-origin:100% 50%;top:431.0px;font-size:14px;transform:scaleX(0.9420);color:#a0710f;">0.00</span>
<span class="t" style="left:1015.65px;top:431.0px;font-size:14px;transform:scaleX(0.9516);">Units</span>
<span class="t" style="left:402.21px;top:433.8px;font-size:12px;transform:scaleX(0.9865);color:#6b6b6b;-webkit-text-stroke:0.43px #6b6b6b;">Legs: Steel</span>
<span class="t" style="left:478.51px;top:433.8px;font-size:12px;transform:scaleX(0.9740);color:#6b6b6b;-webkit-text-stroke:0.43px #6b6b6b;">Color: Black</span>
<span class="t" style="left:192.40px;top:463.0px;font-size:14px;transform:scaleX(0.9178);">Customizable Desk</span>
<span class="t" style="right:453.59px;transform-origin:100% 50%;top:463.0px;font-size:14px;transform:scaleX(0.9420);">800.40</span>
<span class="t" style="right:360.00px;transform-origin:100% 50%;top:463.0px;font-size:14px;transform:scaleX(0.9420);">0.00</span>
<span class="t" style="right:248.77px;transform-origin:100% 50%;top:463.0px;font-size:14px;transform:scaleX(0.9420);color:#a0710f;-webkit-text-stroke:0.36px #a0710f;">0.00</span>
<span class="t" style="right:122.20px;transform-origin:100% 50%;top:463.0px;font-size:14px;transform:scaleX(0.9420);color:#a0710f;">0.00</span>
<span class="t" style="left:1015.65px;top:463.0px;font-size:14px;transform:scaleX(0.9516);">Units</span>
<span class="t" style="left:402.22px;top:465.8px;font-size:12px;transform:scaleX(1.0141);color:#6b6b6b;-webkit-text-stroke:0.43px #6b6b6b;">Legs: Aluminium</span>
<span class="t" style="left:509.91px;top:465.8px;font-size:12px;transform:scaleX(0.9854);color:#6b6b6b;-webkit-text-stroke:0.43px #6b6b6b;">Color: White</span>
<span class="t" style="left:192.40px;top:495.0px;font-size:14px;transform:scaleX(0.9178);">Customizable Desk</span>
<span class="t" style="right:453.59px;transform-origin:100% 50%;top:495.0px;font-size:14px;transform:scaleX(0.9420);">750.00</span>
<span class="t" style="right:360.00px;transform-origin:100% 50%;top:495.0px;font-size:14px;transform:scaleX(0.9420);">0.00</span>
<span class="t" style="right:248.77px;transform-origin:100% 50%;top:495.0px;font-size:14px;transform:scaleX(0.9420);color:#a0710f;-webkit-text-stroke:0.36px #a0710f;">0.00</span>
<span class="t" style="right:122.20px;transform-origin:100% 50%;top:495.0px;font-size:14px;transform:scaleX(0.9420);color:#a0710f;">0.00</span>
<span class="t" style="left:1015.65px;top:495.0px;font-size:14px;transform:scaleX(0.9516);">Units</span>
<span class="t" style="left:402.21px;top:497.8px;font-size:12px;transform:scaleX(0.9884);color:#6b6b6b;-webkit-text-stroke:0.43px #6b6b6b;">Legs: Custom</span>
<span class="t" style="left:493.11px;top:497.8px;font-size:12px;transform:scaleX(0.9854);color:#6b6b6b;-webkit-text-stroke:0.43px #6b6b6b;">Color: White</span>
<span class="t" style="left:192.40px;top:527.0px;font-size:14px;transform:scaleX(0.9178);">Customizable Desk</span>
<span class="t" style="right:453.59px;transform-origin:100% 50%;top:527.0px;font-size:14px;transform:scaleX(0.9420);">750.00</span>
<span class="t" style="right:360.00px;transform-origin:100% 50%;top:527.0px;font-size:14px;transform:scaleX(0.9420);">0.00</span>
<span class="t" style="right:248.77px;transform-origin:100% 50%;top:527.0px;font-size:14px;transform:scaleX(0.9420);color:#a0710f;-webkit-text-stroke:0.36px #a0710f;">0.00</span>
<span class="t" style="right:122.20px;transform-origin:100% 50%;top:527.0px;font-size:14px;transform:scaleX(0.9420);color:#a0710f;">0.00</span>
<span class="t" style="left:1015.65px;top:527.0px;font-size:14px;transform:scaleX(0.9516);">Units</span>
<span class="t" style="left:402.21px;top:529.8px;font-size:12px;transform:scaleX(0.9884);color:#6b6b6b;-webkit-text-stroke:0.43px #6b6b6b;">Legs: Custom</span>
<span class="t" style="left:493.11px;top:529.8px;font-size:12px;transform:scaleX(0.9740);color:#6b6b6b;-webkit-text-stroke:0.43px #6b6b6b;">Color: Black</span></div>
</div>
<div class="dd">

<div class="abs" style="left:0;top:132px;width:144px;height:26px;background:#e9e9e9"></div>
<div class="abs" style="left:13px;top:132px;width:99.5px;height:27px;border:2px solid #1fb394"></div>

<div class="abs" style="left:-473px;top:-119px;width:1130px;height:0"><span class="t" style="left:493.47px;top:130.0px;font-size:14px;transform:scaleX(0.9350);">Export</span>
<span class="t" style="left:494.40px;top:155.0px;font-size:14px;transform:scaleX(0.9169);">Archive</span>
<span class="t" style="left:493.48px;top:180.4px;font-size:14px;transform:scaleX(0.9158);">Unarchive</span>
<span class="t" style="left:493.49px;top:206.0px;font-size:14px;transform:scaleX(0.9122);">Delete</span>
<span class="t" style="left:494.40px;top:231.0px;font-size:14px;transform:scaleX(0.9158);">Generate Pricelist</span>
<span class="t" style="left:493.48px;top:257.1px;font-size:14px;transform:scaleX(0.9230);color:#212529;">Update Vendor</span></div>
</div>
</body></html>
